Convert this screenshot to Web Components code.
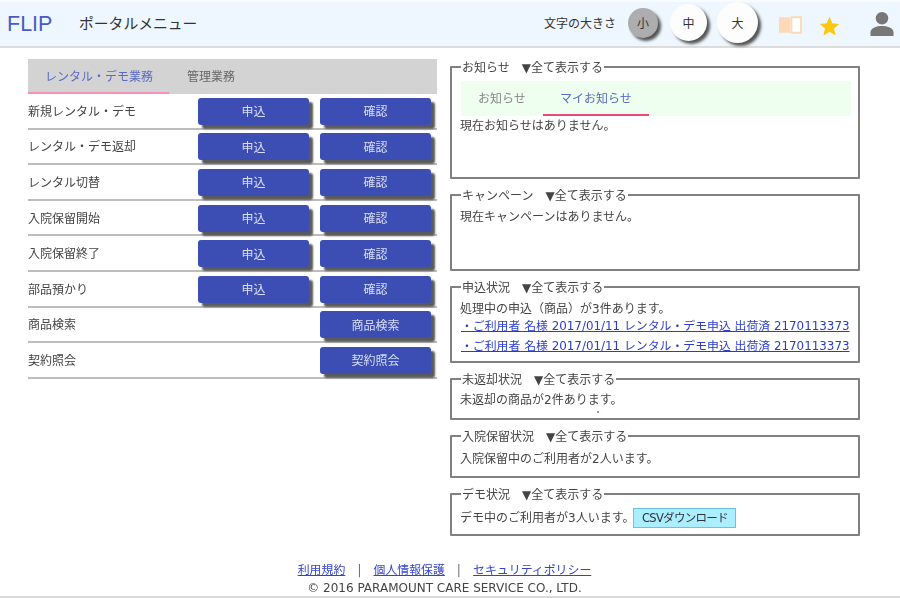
<!DOCTYPE html>
<html lang="ja"><head><meta charset="utf-8"><title>FLIP ポータルメニュー</title>
<style>
html,body{margin:0;padding:0;background:#fff;overflow:hidden}
body{width:900px;height:598px;font:12px "DejaVu Sans","Noto Sans CJK JP",sans-serif;color:#444}
#page{width:900px;height:598px;display:flex;flex-direction:column;filter:blur(.55px)}
#main{display:flex;height:500px;padding:11px 0 0 28px;box-sizing:border-box;gap:13px}
#right{display:flex;flex-direction:column;width:410px}
.p{line-height:18px}
</style></head><body>
<div id="page">
<flip-header></flip-header>
<div id="main">
<menu-panel>
<menu-row label="新規レンタル・デモ"><menu-btn>申込</menu-btn><menu-btn>確認</menu-btn></menu-row>
<menu-row label="レンタル・デモ返却"><menu-btn>申込</menu-btn><menu-btn>確認</menu-btn></menu-row>
<menu-row label="レンタル切替"><menu-btn>申込</menu-btn><menu-btn>確認</menu-btn></menu-row>
<menu-row label="入院保留開始"><menu-btn>申込</menu-btn><menu-btn>確認</menu-btn></menu-row>
<menu-row label="入院保留終了"><menu-btn>申込</menu-btn><menu-btn>確認</menu-btn></menu-row>
<menu-row label="部品預かり"><menu-btn>申込</menu-btn><menu-btn>確認</menu-btn></menu-row>
<menu-row label="商品検索"><menu-btn>商品検索</menu-btn></menu-row>
<menu-row label="契約照会"><menu-btn>契約照会</menu-btn></menu-row>
</menu-panel>
<div id="right">
<info-box title-text="お知らせ" h="120"><notice-tabs></notice-tabs><div class="p" style="padding-top:1px">現在お知らせはありません。</div></info-box>
<info-box title-text="キャンペーン" h="84"><div class="p" style="padding-top:5px">現在キャンペーンはありません。</div></info-box>
<info-box title-text="申込状況" h="84"><div class="p" style="padding-top:5px;margin-bottom:-2px">処理中の申込（商品）が3件あります。</div><status-link>・ご利用者 名様 2017/01/11 レンタル・デモ申込 出荷済 2170113373</status-link><status-link>・ご利用者 名様 2017/01/11 レンタル・デモ申込 出荷済 2170113373</status-link></info-box>
<info-box title-text="未返却状況" h="49"><div class="p" style="padding-top:4px">未返却の商品が2件あります。</div><span style="position:absolute;left:147px;top:40px;width:2px;height:2px;background:#8a95e0"></span></info-box>
<info-box title-text="入院保留状況" h="50"><div class="p" style="padding-top:6px">入院保留中のご利用者が2人います。</div></info-box>
<info-box title-text="デモ状況" h="50"><div class="p" style="padding-top:6px;display:flex;align-items:center;gap:0">デモ中のご利用者が3人います。<csv-btn>CSVダウンロード</csv-btn></div></info-box>
</div>
</div>
<page-footer></page-footer>
</div>
<script>
function def(name,html,init){
  customElements.define(name,class extends HTMLElement{
    constructor(){super();this.attachShadow({mode:"open"}).innerHTML=html;}
    connectedCallback(){if(init)init(this);}
  });
}
def("flip-header",`<style>
:host{display:flex;align-items:center;height:48px;box-sizing:border-box;background:#eef7ff;border-top:2px solid #f8fcff;border-bottom:2px solid #dcdcdc;flex:none}
.logo{font:21.500px "Liberation Sans",sans-serif;color:#4a5cc4;margin-left:7px;width:72px}
.t{font-size:14.800px;color:#333;font-family:"Noto Sans CJK JP",sans-serif;flex:1;margin-top:-4px}
.s{font-size:12px;color:#333;margin-right:12px;margin-top:-4px;font-family:"Noto Sans CJK JP",sans-serif}
.icons{display:flex;align-items:center}
svg{display:block}
</style><div class="logo">FLIP</div><div class="t">ポータルメニュー</div><div class="s">文字の大きさ</div>
<div class="icons"><size-dot d="30" on>小</size-dot><size-dot d="37" style="margin-left:12px">中</size-dot><size-dot d="41" style="margin-left:10px">大</size-dot>
<svg style="margin:2px 0 0 20px" width="24" height="20" viewBox="0 0 25 20"><path d="M1 2h11l1 1v16l-1-1H1z" fill="#fdd9b8"/><path d="M14 2h10v16H14z" fill="#fff" stroke="#fdd9b8" stroke-width="2"/></svg>
<svg style="margin:4px 0 0 17px" width="21" height="20" viewBox="0 0 24 23"><path d="M12 1l3.200 7.400 8 .7-6 5.300 1.800 7.900L12 18.200l-7 4.100 1.800-7.900-6-5.300 8-.7z" fill="#fdc90e"/></svg>
<svg style="margin:0 6px 0 30px" width="24" height="24" viewBox="0 0 24 25"><circle cx="12" cy="6.500" r="6.500" fill="#777"/><path d="M0 25v-4c0-4.500 7-6.500 12-6.500s12 2 12 6.500v4z" fill="#777"/></svg>
</div>`);
def("size-dot",`<style>
:host{display:flex;align-items:center;justify-content:center;flex:none;border-radius:50%;background:#fdfdfd;box-shadow:3px 3px 3px #555;color:#333;font:12px "Noto Sans CJK JP",sans-serif;margin-top:-3px}
:host([on]){background:#adadb0}
</style><slot></slot>`,el=>{const d=el.getAttribute("d")+"px";el.style.width=d;el.style.height=d;});
def("menu-panel",`<style>
:host{display:block;width:409px;flex:none}
.tabs{display:flex;height:35px;background:#d3d3d3;box-sizing:border-box;align-items:center}
.a{width:141px;height:35px;box-sizing:border-box;border-bottom:2px solid #f493b6;color:#5a6bc4;padding-left:17px;line-height:37px}
.b{margin:-3px 0 0 18px;color:#666}
</style><div class="tabs"><div class="a">レンタル・デモ業務</div><div class="b">管理業務</div></div><slot></slot>`);
def("menu-row",`<style>
:host{display:flex;height:35.6px;box-sizing:border-box;border-bottom:2px solid #bdbdbd;align-items:center;color:#444}
.l{flex:1;margin-top:-1px}
.r{display:flex;gap:11px;margin:1px 6px 0 0}
</style><div class="l"></div><div class="r"><slot></slot></div>`,el=>{el.shadowRoot.querySelector(".l").textContent=el.getAttribute("label");});
def("menu-btn",`<style>
:host{display:flex;align-items:center;justify-content:center;width:111px;height:27px;box-sizing:border-box;padding-bottom:1px;background:#3c4eb4;border-radius:3px;box-shadow:4px 4px 2px #5a5a5a;color:#d9def5;font-size:12px}
</style><slot></slot>`);
def("info-box",`<style>
:host{display:block;position:relative;margin-bottom:8px;flex:none}
fieldset{margin:0;padding:0 8px;border:2px solid #808080;border-radius:1px;height:100%;box-sizing:border-box;min-width:0}
legend{padding:2px 1px 0;margin-left:1px;line-height:14px;color:#444;white-space:nowrap}
.m{margin-left:12px}
</style><fieldset><legend><span class="t"></span><span class="m">▼全て表示する</span></legend><slot></slot></fieldset>`,el=>{
  el.shadowRoot.querySelector(".t").textContent=el.getAttribute("title-text");
  el.style.height=el.getAttribute("h")+"px";
});
def("notice-tabs",`<style>
:host{display:flex;height:35px;background:#efffef;margin:6px -1px 0 1px;line-height:36px}
.b{color:#888;margin-left:17px;width:65px}
.a{color:#5a6bc4;width:106px;height:35px;box-sizing:border-box;border-bottom:2px solid #f0457f;text-align:center}
</style><div class="b">お知らせ</div><div class="a">マイお知らせ</div>`);
def("status-link",`<style>
:host{display:block;line-height:20px;color:#2a3bd0;text-decoration:underline;white-space:nowrap;font-size:11.880px;margin-left:1px}
</style><slot></slot>`);
def("csv-btn",`<style>
:host{display:flex;align-items:center;justify-content:center;width:103px;height:20px;margin-left:-1px;box-sizing:border-box;background:#aaeeff;border:1px solid #66c4ea;color:#333;font-size:11.500px;letter-spacing:-.7px}
</style><slot></slot>`);
def("page-footer",`<style>
:host{display:block;height:50px;border-bottom:2px solid #d8d8d8;text-align:center;box-sizing:border-box;padding-top:13px}
.l{display:flex;justify-content:center;gap:12.500px;line-height:16px;margin-left:-11px;font-size:11.900px;font-family:"Noto Sans CJK JP",sans-serif}
a{color:#3344cc;text-decoration:underline}
.c{font-size:12px;line-height:18px;color:#444;margin:2px 0 0 -11px;font-family:"DejaVu Sans",sans-serif}
</style><div class="l"><a>利用規約</a><span>|</span><a>個人情報保護</a><span>|</span><a>セキュリティポリシー</a></div><div class="c">© 2016 PARAMOUNT CARE SERVICE CO., LTD.</div>`);
</script>
</body></html>
